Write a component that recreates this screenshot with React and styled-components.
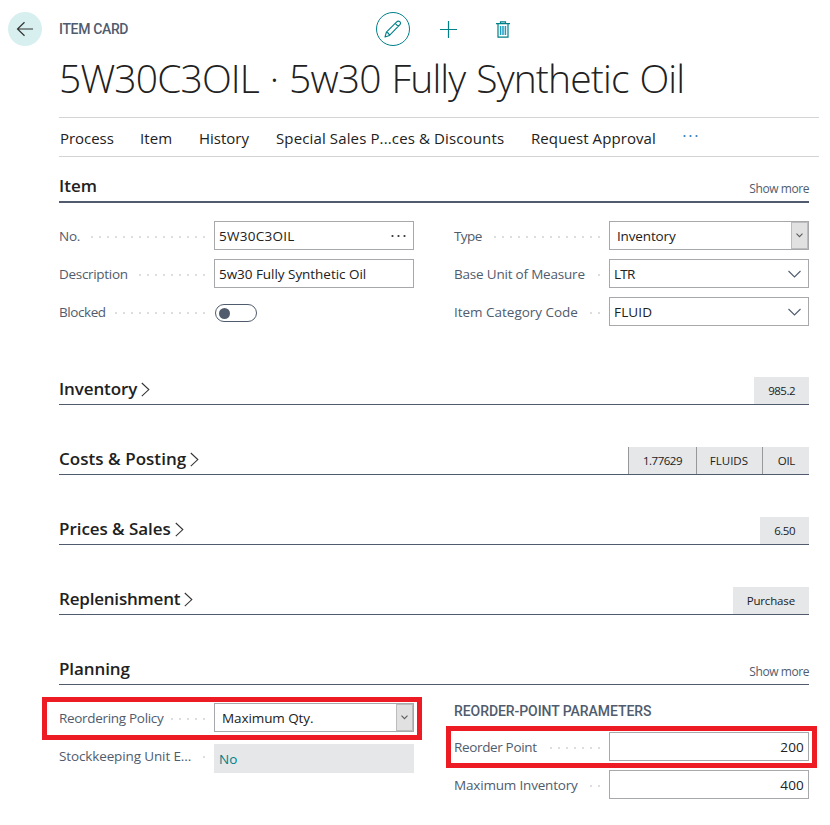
import React from "react";
import styled, { createGlobalStyle } from "styled-components";

const ink = "#212121";
const slate = "#505c6d";
const teal = "#008089";

const GlobalStyle = createGlobalStyle`
  *, *::before, *::after { box-sizing: border-box; }
  body { margin: 0; background: #fff; color: ${ink}; font-family: "Open Sans", sans-serif; }
  svg { display: block; }
  button { font: inherit; color: inherit; border: 0; padding: 0; background: none; cursor: pointer; }
`;

const Page = styled.div`
  width: 830px;
  height: 825px;
  overflow: hidden;
  display: flex;
  flex-direction: column;
  background: #fff;
`;

const TopBar = styled.header`
  display: flex;
  align-items: center;
  height: 34px;
  margin: 12px 0 0 8px;
`;

const BackButton = styled.button`
  width: 34px;
  height: 34px;
  border-radius: 50%;
  background: #d8eff0;
  display: grid;
  place-items: center;
`;

const Caption = styled.h2`
  margin: 0;
  font: 500 14px/20px Roboto, sans-serif;
  letter-spacing: ${(p) => p.$ls ?? 0}px;
  color: ${slate};
  white-space: nowrap;
`;

const PageCaption = styled(Caption)`
  width: 317px;
  margin-left: 17px;
`;

const Actions = styled.div`
  display: flex;
  align-items: center;
  gap: 21px;
`;

const IconButton = styled.button`
  width: 34px;
  height: 34px;
  display: grid;
  place-items: center;
  border-radius: 50%;
  border: 1px solid ${(p) => (p.$ring ? teal : "transparent")};
`;

const Title = styled.h1`
  margin: 5px 0 0 59px;
  height: 66px;
  font-weight: 300;
  font-size: 39px;
  line-height: 53px;
  letter-spacing: -0.86px;
  word-spacing: 1.6px;
  white-space: nowrap;
`;

const Nav = styled.nav`
  display: flex;
  align-items: center;
  width: 760px;
  height: 40px;
  margin-left: 59px;
  border-top: 1px solid #d2d4d6;
  border-bottom: 1px solid #d2d4d6;
`;

const NavItem = styled.button`
  width: ${(p) => p.$w}px;
  padding: 2px 0 0 1px;
  text-align: left;
  white-space: nowrap;
  font-size: 15px;
  line-height: 36px;
  letter-spacing: ${(p) => p.$ls ?? 0}px;
`;

const NavMore = styled.button`
  margin: 0 0 2px 1px;
`;

const Content = styled.main`
  width: 750px;
  margin-left: 59px;
`;

const SectionHeader = styled.div`
  display: flex;
  justify-content: space-between;
  align-items: flex-end;
  height: ${(p) => p.$h}px;
  margin-top: ${(p) => p.$mt ?? 0}px;
  border-bottom: ${(p) => p.$line ?? 1}px solid ${slate};
`;

const SectionTitle = styled.h3`
  margin: 0 0 3px;
  display: flex;
  align-items: center;
  gap: 4px;
  font-weight: 600;
  font-size: 17px;
  line-height: 24px;
  letter-spacing: ${(p) => p.$ls ?? 0}px;
`;

const ShowMore = styled.button`
  margin-bottom: 3px;
  font-size: 12px;
  line-height: 18px;
  letter-spacing: -0.43px;
  color: ${slate};
`;

const Chips = styled.div`
  display: flex;
  height: 27px;
`;

const Chip = styled.span`
  width: ${(p) => p.$w}px;
  padding-right: 14px;
  background: #e5e7e9;
  border-left: ${(p) => (p.$divided ? "1px solid #96989a" : "0")};
  text-align: right;
  font-size: 11.5px;
  line-height: 28px;
  letter-spacing: ${(p) => p.$ls ?? 0}px;
`;

const Columns = styled.div`
  display: grid;
  grid-template-columns: 355px 355px;
  column-gap: 40px;
  margin-top: 18px;
`;

const Column = styled.div`
  display: flex;
  flex-direction: column;
  gap: ${(p) => p.$gap ?? 9}px;
`;

const FieldRow = styled.div`
  display: flex;
  height: 29px;
  position: relative;
`;

const Highlight = styled.span`
  position: absolute;
  inset: ${(p) => p.$inset};
  border: 5px solid #ed1c24;
  pointer-events: none;
`;

const LabelCell = styled.div`
  width: 155px;
  height: 29px;
  padding-right: 9px;
  margin-top: ${(p) => p.$shift ?? 0}px;
  display: flex;
  justify-content: space-between;
  align-items: center;
`;

const Label = styled.label`
  padding-top: 2px;
  font-size: 13.5px;
  line-height: 29px;
  white-space: nowrap;
  letter-spacing: ${(p) => p.$ls ?? 0}px;
  color: ${slate};
`;

const Leader = styled.i`
  width: ${(p) => p.$n * 8 - 6}px;
  height: 2px;
  margin-top: 2px;
  background: repeating-linear-gradient(to right, #dcddde 0 2px, transparent 2px 8px);
`;

const Control = styled.div`
  width: 200px;
  height: 29px;
  display: flex;
  align-items: center;
  justify-content: ${(p) => (p.$number ? "flex-end" : "space-between")};
  padding: 0 4px;
  border: 1px solid #a6a8ab;
  font-size: 13.5px;
  line-height: 27px;
  letter-spacing: ${(p) => p.$ls ?? 0}px;
  white-space: nowrap;
`;

const Value = styled.span`
  padding-top: 2px;
`;

const SelectControl = styled(Control)`
  padding: 0 0 0 7px;
`;

const SelectArrow = styled.span`
  width: 17px;
  height: 27px;
  display: grid;
  place-items: center;
  background: #e1e1e1;
  border: 1px solid #bcbcbc;
`;

const ReadOnly = styled(Control)`
  border-color: #e5e7e9;
  background: #e5e7e9;
  color: ${teal};
  padding-top: 2px;
`;

const LookupCaret = styled.span`
  margin-right: 3px;
`;

const AssistDots = styled.span`
  margin-right: 2px;
`;

const Toggle = styled.span`
  width: 42px;
  height: 18px;
  margin: 7px 0 0 1px;
  padding: 0 3px;
  display: flex;
  align-items: center;
  border: 1px solid ${slate};
  border-radius: 9px;
`;

const Knob = styled.span`
  width: 11px;
  height: 11px;
  border-radius: 50%;
  background: ${slate};
`;

const GroupCaption = styled(Caption)`
  height: 20px;
  line-height: 17px;
`;

const Dots = ({ color }) => (
  <svg width="16" height="4" viewBox="0 0 16 4" fill={color}>
    {[1.5, 7.5, 13.5].map((x) => (
      <circle key={x} cx={x} cy="2" r="1.1" />
    ))}
  </svg>
);

const BackIcon = () => (
  <svg width="18" height="18" viewBox="0 0 18 18" fill="none" stroke="#333" strokeWidth="1.2">
    <path d="M17 9H1.5M8.5 2.2 1.5 9l7 6.8" />
  </svg>
);

const PencilIcon = () => (
  <svg width="18" height="18" viewBox="0 0 18 18" fill="none" stroke={teal} strokeWidth="1.1" strokeLinejoin="round">
    <path d="M1 17l1.400-4.900L12.700 1.800c1-1 2.300-.9 3.100-.1s.9 2.100-.1 3.100L5.500 15.400zM2.400 12.100c1.500.3 2.700 1.500 3.100 3.300M11.200 3.300l3.200 3.200" />
  </svg>
);

const PlusIcon = () => (
  <svg width="17" height="17" viewBox="0 0 17 17" stroke={teal} strokeWidth="1.2">
    <path d="M8.5 0v17M0 8.5h17" />
  </svg>
);

const TrashIcon = () => (
  <svg width="14" height="17" viewBox="0 0 14 17" fill="none" stroke={teal} strokeWidth="1.2">
    <path d="M0 2.6h14M4.5 2.5V.8h5v1.7M2 2.6v13.6h10V2.600" />
    <path d="M4.6 5v9M7 5v9M9.4 5v9" stroke="#1c9cc0" strokeWidth="1.5" />
  </svg>
);

const CaretRight = () => (
  <svg width="9" height="16" viewBox="0 0 9 16" fill="none" stroke="#333" strokeWidth="1.1">
    <path d="M.8 2 7.800 8.600.8 15.200" />
  </svg>
);

const CaretDown = () => (
  <svg width="13" height="8" viewBox="0 0 13 8" fill="none" stroke={slate} strokeWidth="1.1">
    <path d="M.5 1l6 6 6-6" />
  </svg>
);

const SmallCaret = () => (
  <svg width="7" height="5" viewBox="0 0 7 5" fill="none" stroke="#5c5c5c" strokeWidth="1.1">
    <path d="M.5.7l3 3 3-3" />
  </svg>
);

const Field = ({ label, ls, dots, shift, highlight, children }) => (
  <FieldRow>
    <LabelCell $shift={shift}>
      <Label $ls={ls}>{label}</Label>
      <Leader $n={dots} />
    </LabelCell>
    {children}
    {highlight && <Highlight $inset={highlight} />}
  </FieldRow>
);

const Input = ({ ls, number, assist, children }) => (
  <Control $ls={ls} $number={number}>
    <Value>{children}</Value>
    {assist && (
      <AssistDots>
        <Dots color="#333" />
      </AssistDots>
    )}
  </Control>
);

const Select = ({ ls, children }) => (
  <SelectControl $ls={ls}>
    <Value>{children}</Value>
    <SelectArrow>
      <SmallCaret />
    </SelectArrow>
  </SelectControl>
);

const Lookup = ({ ls, children }) => (
  <Control $ls={ls}>
    <Value>{children}</Value>
    <LookupCaret>
      <CaretDown />
    </LookupCaret>
  </Control>
);

const menu = [
  { text: "Process", w: 80, ls: -0.05 },
  { text: "Item", w: 59, ls: 0.1 },
  { text: "History", w: 77 },
  { text: "Special Sales P...ces & Discounts", w: 255, ls: 0.13 },
  { text: "Request Approval", w: 152, ls: 0.09 },
];

const collapsed = [
  { title: "Inventory", ls: -0.12, chips: [{ text: "985.2", w: 55, ls: -0.5 }] },
  {
    title: "Costs & Posting",
    ls: 0.04,
    chips: [
      { text: "1.77629", w: 68, ls: -0.5, divided: true },
      { text: "FLUIDS", w: 66, divided: true },
      { text: "OIL", w: 47, ls: -0.3, divided: true },
    ],
  },
  { title: "Prices & Sales", ls: -0.05, chips: [{ text: "6.50", w: 49, ls: -0.5 }] },
  { title: "Replenishment", ls: -0.2, chips: [{ text: "Purchase", w: 76, ls: -0.15 }] },
];

export default function App() {
  return (
    <Page>
      <GlobalStyle />
      <TopBar>
        <BackButton aria-label="Back">
          <BackIcon />
        </BackButton>
        <PageCaption $ls={-0.35}>ITEM CARD</PageCaption>
        <Actions>
          <IconButton $ring aria-label="Edit">
            <PencilIcon />
          </IconButton>
          <IconButton aria-label="New">
            <PlusIcon />
          </IconButton>
          <IconButton aria-label="Delete">
            <TrashIcon />
          </IconButton>
        </Actions>
      </TopBar>
      <Title>5W30C3OIL · 5w30 Fully Synthetic Oil</Title>
      <Nav>
        {menu.map((m) => (
          <NavItem key={m.text} $w={m.w} $ls={m.ls}>
            {m.text}
          </NavItem>
        ))}
        <NavMore aria-label="More">
          <Dots color="#2f7fc1" />
        </NavMore>
      </Nav>
      <Content>
        <SectionHeader $h={46} $line={2}>
          <SectionTitle>Item</SectionTitle>
          <ShowMore>Show more</ShowMore>
        </SectionHeader>
        <Columns>
          <Column>
            <Field label="No." ls={-0.27} dots={15}>
              <Input ls={0.28} assist>5W30C3OIL</Input>
            </Field>
            <Field label="Description" ls={-0.31} dots={9}>
              <Input ls={-0.04}>5w30 Fully Synthetic Oil</Input>
            </Field>
            <Field label="Blocked" ls={-0.42} dots={12}>
              <Toggle>
                <Knob />
              </Toggle>
            </Field>
          </Column>
          <Column>
            <Field label="Type" ls={-0.6} dots={14}>
              <Select ls={-0.15}>Inventory</Select>
            </Field>
            <Field label="Base Unit of Measure" ls={-0.2} dots={1}>
              <Lookup ls={-0.7}>LTR</Lookup>
            </Field>
            <Field label="Item Category Code" ls={-0.02} dots={2}>
              <Lookup ls={0.17}>FLUID</Lookup>
            </Field>
          </Column>
        </Columns>
        {collapsed.map((s, i) => (
          <SectionHeader key={s.title} $h={28} $mt={i ? 42 : 51}>
            <SectionTitle $ls={s.ls}>
              {s.title}
              <CaretRight />
            </SectionTitle>
            <Chips>
              {s.chips.map((c) => (
                <Chip key={c.text} $w={c.w} $ls={c.ls} $divided={c.divided}>
                  {c.text}
                </Chip>
              ))}
            </Chips>
          </SectionHeader>
        ))}
        <SectionHeader $h={28} $mt={42}>
          <SectionTitle $ls={-0.1}>Planning</SectionTitle>
          <ShowMore>Show more</ShowMore>
        </SectionHeader>
        <Columns>
          <Column $gap={12}>
            <Field label="Reordering Policy" ls={-0.31} dots={5} highlight="-6px -8px -8px -17px">
              <Select ls={-0.09}>Maximum Qty.</Select>
            </Field>
            <Field label="Stockkeeping Unit E..." ls={-0.13} dots={1} shift={-3}>
              <ReadOnly>No</ReadOnly>
            </Field>
          </Column>
          <Column>
            <GroupCaption $ls={-0.07}>REORDER-POINT PARAMETERS</GroupCaption>
            <Field label="Reorder Point" ls={-0.35} dots={7} highlight="-6px -8px -7px -8px">
              <Input number ls={0.2}>200</Input>
            </Field>
            <Field label="Maximum Inventory" ls={-0.18} dots={2}>
              <Input number ls={0.2}>400</Input>
            </Field>
          </Column>
        </Columns>
      </Content>
    </Page>
  );
}
